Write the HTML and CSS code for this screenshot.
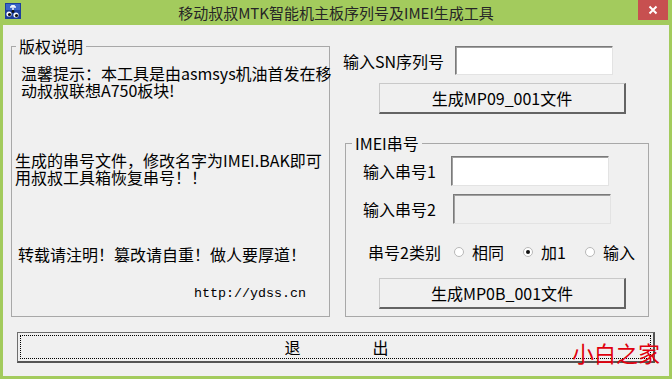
FILE: index.html
```html
<!DOCTYPE html>
<html lang="zh-CN">
<head>
  <meta charset="UTF-8">
  <title>移动叔叔MTK智能机主板序列号及IMEI生成工具</title>
  <link rel="stylesheet" href="styles.css">
</head>
<body>
  <div class="window">
    <div class="titlebar">
      <svg class="app-icon" width="16" height="16" viewBox="0 0 16 16">
        <rect x="0" y="0" width="16" height="16" fill="#1d3f9c"/>
        <rect x="1" y="1" width="14" height="6" fill="#3a66c8"/>
        <path d="M8 2 L8 7 M6 3 L10 3 M6 3 L6 5 M10 3 L10 5" stroke="#fff" stroke-width="1.4" fill="none"/>
        <circle cx="4" cy="11" r="2.6" fill="#fff"/>
        <circle cx="11" cy="12" r="2.6" fill="#fff"/>
        <circle cx="4.5" cy="11.5" r="1.6" fill="#111"/>
        <circle cx="11.5" cy="12.5" r="1.6" fill="#111"/>
        <circle cx="8" cy="8.5" r="1.4" fill="#111"/>
      </svg>
      <div class="title">移动叔叔MTK智能机主板序列号及IMEI生成工具</div>
      <div class="close-btn">
        <svg width="10" height="10" viewBox="0 0 10 10">
          <path d="M1.5 1.5 L8.5 8.5 M8.5 1.5 L1.5 8.5" stroke="#fff" stroke-width="2" fill="none"/>
        </svg>
      </div>
    </div>

    <div class="client">
      <div class="main">
        <fieldset class="group notes">
          <legend>版权说明</legend>
          <p class="note note-tip">温馨提示：本工具是由asmsys机油首发在移<br>动叔叔联想A750板块!</p>
          <p class="note note-bak">生成的串号文件，修改名字为IMEI.BAK即可<br>用叔叔工具箱恢复串号！！</p>
          <p class="note note-warn">转载请注明！篡改请自重！做人要厚道！</p>
          <p class="note note-url">http://ydss.cn</p>
        </fieldset>

        <div class="side">
          <div class="row sn-row">
            <label class="lbl lbl-sn">输入SN序列号</label>
            <input class="field" type="text">
          </div>
          <button class="btn gen-btn gen-sn">生成MP09_001文件</button>

          <fieldset class="group imei">
            <legend>IMEI串号</legend>
            <div class="row imei-row">
              <label class="lbl lbl-1">输入串号1</label>
              <input class="field" type="text">
            </div>
            <div class="row imei-row row-2">
              <label class="lbl lbl-2">输入串号2</label>
              <input class="field" type="text" disabled>
            </div>
            <div class="row type-row">
              <span class="lbl lbl-type">串号2类别</span>
              <span class="opt"><span class="radio"></span>相同</span>
              <span class="opt"><span class="radio checked"></span>加1</span>
              <span class="opt"><span class="radio"></span>输入</span>
            </div>
            <button class="btn gen-btn gen-imei">生成MP0B_001文件</button>
          </fieldset>
        </div>
      </div>

      <button class="btn exit-btn"><span class="focus"><span>退</span><span>出</span></span></button>
    </div>

    <div class="watermark">小白之家</div>
  </div>
</body>
</html>
```

FILE: styles.css
```css
body {
  margin: 0;
  font-family: "Noto Sans CJK SC", sans-serif;
  color: #000;
}

.window {
  position: relative;
  width: 672px;
  height: 379px;
  background-color: #a3cb5d;
  display: flex;
  flex-direction: column;
}

/* title bar */
.titlebar {
  height: 25px;
  display: grid;
  grid-template-columns: 1fr auto 1fr;
  align-items: start;
}

.app-icon {
  margin: 3px 0 0 5px;
}

.title {
  font-size: 15px;
  line-height: 25px;
  color: #262626;
}

.close-btn {
  justify-self: end;
  width: 30px;
  height: 20px;
  margin-right: 4px;
  background-color: #c75050;
  display: flex;
  align-items: center;
  justify-content: center;
}

/* client area */
.client {
  flex: 1;
  margin: 0 3px 3px;
  background-color: #f0f0f0;
  display: flex;
  flex-direction: column;
}

.main {
  display: flex;
  margin-top: 13px;
}

.group {
  box-sizing: border-box;
  margin: 0;
  border: 1px solid #a8a8a8;
  min-width: 0;
}

.group legend {
  padding: 0 3px;
  margin-left: 1px;
  font-size: 16px;
  line-height: 16px;
}

.notes {
  width: 319px;
  height: 279px;
  margin-left: 8px;
  padding: 11px 0 0 3px;
}

.note {
  margin: 0;
  font-size: 16px;
  line-height: 17px;
  white-space: nowrap;
}

.note-tip {
  margin-left: 6px;
}

.note-bak {
  margin-top: 53px;
}

.note-warn {
  margin: 60px 0 0 3px;
}

.note-url {
  margin: 22px 0 0 179px;
  font-family: "Liberation Mono", monospace;
  font-size: 13.33px;
}

/* right column */
.side {
  width: 306px;
  margin: 8px 0 0 13px;
}

.row {
  display: flex;
  align-items: center;
}

.lbl {
  flex-shrink: 0;
  font-size: 16px;
  line-height: 16px;
  white-space: nowrap;
}

.sn-row {
  height: 29px;
}

.lbl-sn {
  width: 112px;
}

.field {
  box-sizing: border-box;
  width: 158px;
  height: 29px;
  margin: 0;
  padding: 0 3px;
  border: 1px solid;
  border-color: #7a7a7a #e3e3e3 #e3e3e3 #7a7a7a;
  box-shadow: inset 1px 1px 0 #a0a0a0;
  background-color: #fff;
  font-family: inherit;
  font-size: 16px;
}

.field:disabled {
  background-color: #f0f0f0;
}

.btn {
  box-sizing: border-box;
  padding: 0;
  background-color: #f0f0f0;
  border: 1px solid;
  border-color: #c9c9c9 #646464 #646464 #c9c9c9;
  border-width: 1px 2px 2px 1px;
  font-family: inherit;
  font-size: 16px;
  line-height: 16px;
  color: #000;
}

.gen-btn {
  display: block;
  width: 247px;
  height: 31px;
}

.gen-sn {
  margin: 8px 0 0 36px;
}

/* IMEI group */
.imei {
  width: 304px;
  height: 182px;
  margin: 21px 0 0 2px;
  padding: 5px 0 0 5px;
}

.imei-row {
  height: 30px;
}

.imei-row .field {
  height: 30px;
}

.row-2 {
  margin-top: 8px;
}

.lbl-1 {
  width: 88px;
  margin-left: 12px;
}

.lbl-2 {
  width: 90px;
  margin-left: 12px;
}

.type-row {
  height: 16px;
  margin: 20px 0 0 17px;
}

.lbl-type {
  width: 86px;
}

.opt {
  flex-shrink: 0;
  display: flex;
  align-items: center;
  gap: 8px;
  margin-right: 19px;
  font-size: 16px;
  line-height: 16px;
  white-space: nowrap;
}

.radio {
  box-sizing: border-box;
  width: 10px;
  height: 10px;
  border: 1px solid #b8b8b8;
  border-radius: 50%;
  background-color: #fff;
  display: flex;
  align-items: center;
  justify-content: center;
}

.radio.checked::after {
  content: "";
  width: 4px;
  height: 4px;
  border-radius: 50%;
  background-color: #111;
}

.gen-imei {
  margin: 18px 0 0 28px;
}

/* exit button */
.exit-btn {
  width: 638px;
  height: 31px;
  margin: 15px 0 0 14px;
  padding: 2px;
  border-color: #6e6e6e #555 #555 #6e6e6e;
  display: flex;
}

.focus {
  flex: 1;
  border: 1px dotted #000;
  display: flex;
  align-items: center;
  justify-content: center;
  gap: 72px;
  padding-left: 2px;
}

.watermark {
  position: absolute;
  left: 572px;
  top: 339px;
  font-size: 22px;
  line-height: 26px;
  color: #e0000e;
}
```
